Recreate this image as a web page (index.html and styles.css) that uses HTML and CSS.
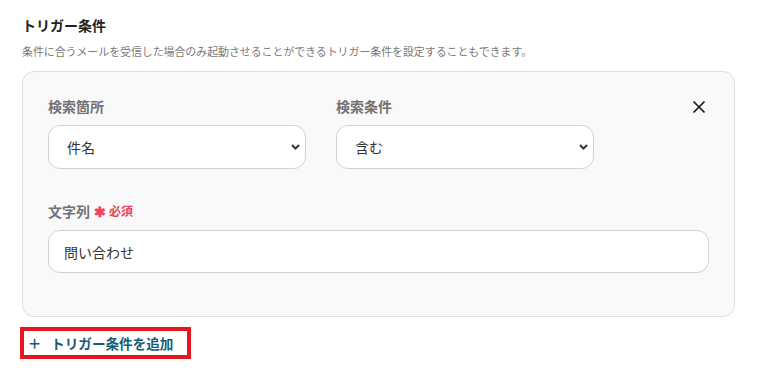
FILE: index.html
```html
<!DOCTYPE html>
<html lang="ja">
<head>
<meta charset="utf-8">
<link rel="stylesheet" href="styles.css">
</head>
<body>
<div class="wrap">
  <h2 class="title">トリガー条件</h2>
  <p class="desc">条件に合うメールを受信した場合のみ起動させることができるトリガー条件を設定することもできます。</p>
  <div class="card">
    <div class="row">
      <div class="field">
        <div class="label">検索箇所</div>
        <div class="select"><span>件名</span>
          <svg class="chev" width="9" height="6" viewBox="0 0 9 6"><path d="M1 1 L4.5 4.5 L8 1" fill="none" stroke="#333" stroke-width="2"/></svg>
        </div>
      </div>
      <div class="field">
        <div class="label">検索条件</div>
        <div class="select"><span>含む</span>
          <svg class="chev" width="9" height="6" viewBox="0 0 9 6"><path d="M1 1 L4.5 4.5 L8 1" fill="none" stroke="#333" stroke-width="2"/></svg>
        </div>
      </div>
      <svg class="close" width="14" height="14" viewBox="0 0 14 14"><path d="M1.5 1.5 L12.5 12.5 M12.5 1.5 L1.5 12.5" stroke="#1a1a1a" stroke-width="1.7" fill="none"/></svg>
    </div>
    <div class="field2">
      <div class="label">文字列<span class="req"><span class="ast">✱</span>必須</span></div>
      <div class="input">問い合わせ</div>
    </div>
  </div>
  <div class="add"><span class="plus">+</span>トリガー条件を追加</div>
</div>
</body>
</html>
```
FILE: styles.css
```css
* { box-sizing: border-box; }
body {
  margin: 0;
  background: #fff;
  font-family: "Noto Sans CJK JP", "Noto Sans", sans-serif;
}
.wrap {
  padding: 15px 0 0 22px;
  width: 735px;
}
.title {
  margin: 0;
  font-size: 14px;
  line-height: 20px;
  font-weight: 700;
  color: #222;
}
.desc {
  margin: 8px 0 0;
  font-size: 10.9px;
  line-height: 16px;
  color: #7a7a7a;
}
.card {
  margin-top: 12px;
  background: #f9f9fa;
  border: 1px solid #dedfe3;
  border-radius: 12px;
  padding: 24px 25px 43px 25px;
}
.row {
  display: flex;
  align-items: flex-start;
  gap: 30px;
}
.field { width: 258px; }
.label {
  font-size: 14px;
  line-height: 20px;
  font-weight: 700;
  color: #727272;
  margin-bottom: 9px;
  display: flex;
  align-items: center;
}
.select {
  height: 44px;
  background: #fff;
  border: 1px solid #cfd2d9;
  border-radius: 12px;
  display: flex;
  align-items: center;
  justify-content: space-between;
  padding: 0 5px 0 18px;
  font-size: 14px;
  color: #333;
}
.close { margin-left: auto; margin-top: 4px; margin-right: 3px; }
.field2 { margin-top: 32px; }
.req {
  color: #e8435c;
  font-size: 12px;
  margin-left: 4px;
  display: flex;
  align-items: center;
}
.ast { font-size: 14px; margin-right: 3px; }
.input {
  height: 43px;
  background: #fff;
  border: 1px solid #cfd2d9;
  border-radius: 12px;
  display: flex;
  align-items: center;
  padding: 0 15px;
  font-size: 14px;
  color: #333;
}
.add {
  margin: 10px 0 0 -2px;
  width: 171px;
  height: 32px;
  border: 4px solid #e8161f;
  display: flex;
  align-items: center;
  padding-left: 5px;
  font-size: 13.6px;
  font-weight: 700;
  color: #155d72;
  white-space: nowrap;
}
.plus { font-size: 20px; font-weight: 400; margin-right: 11px; line-height: 1; }
```
